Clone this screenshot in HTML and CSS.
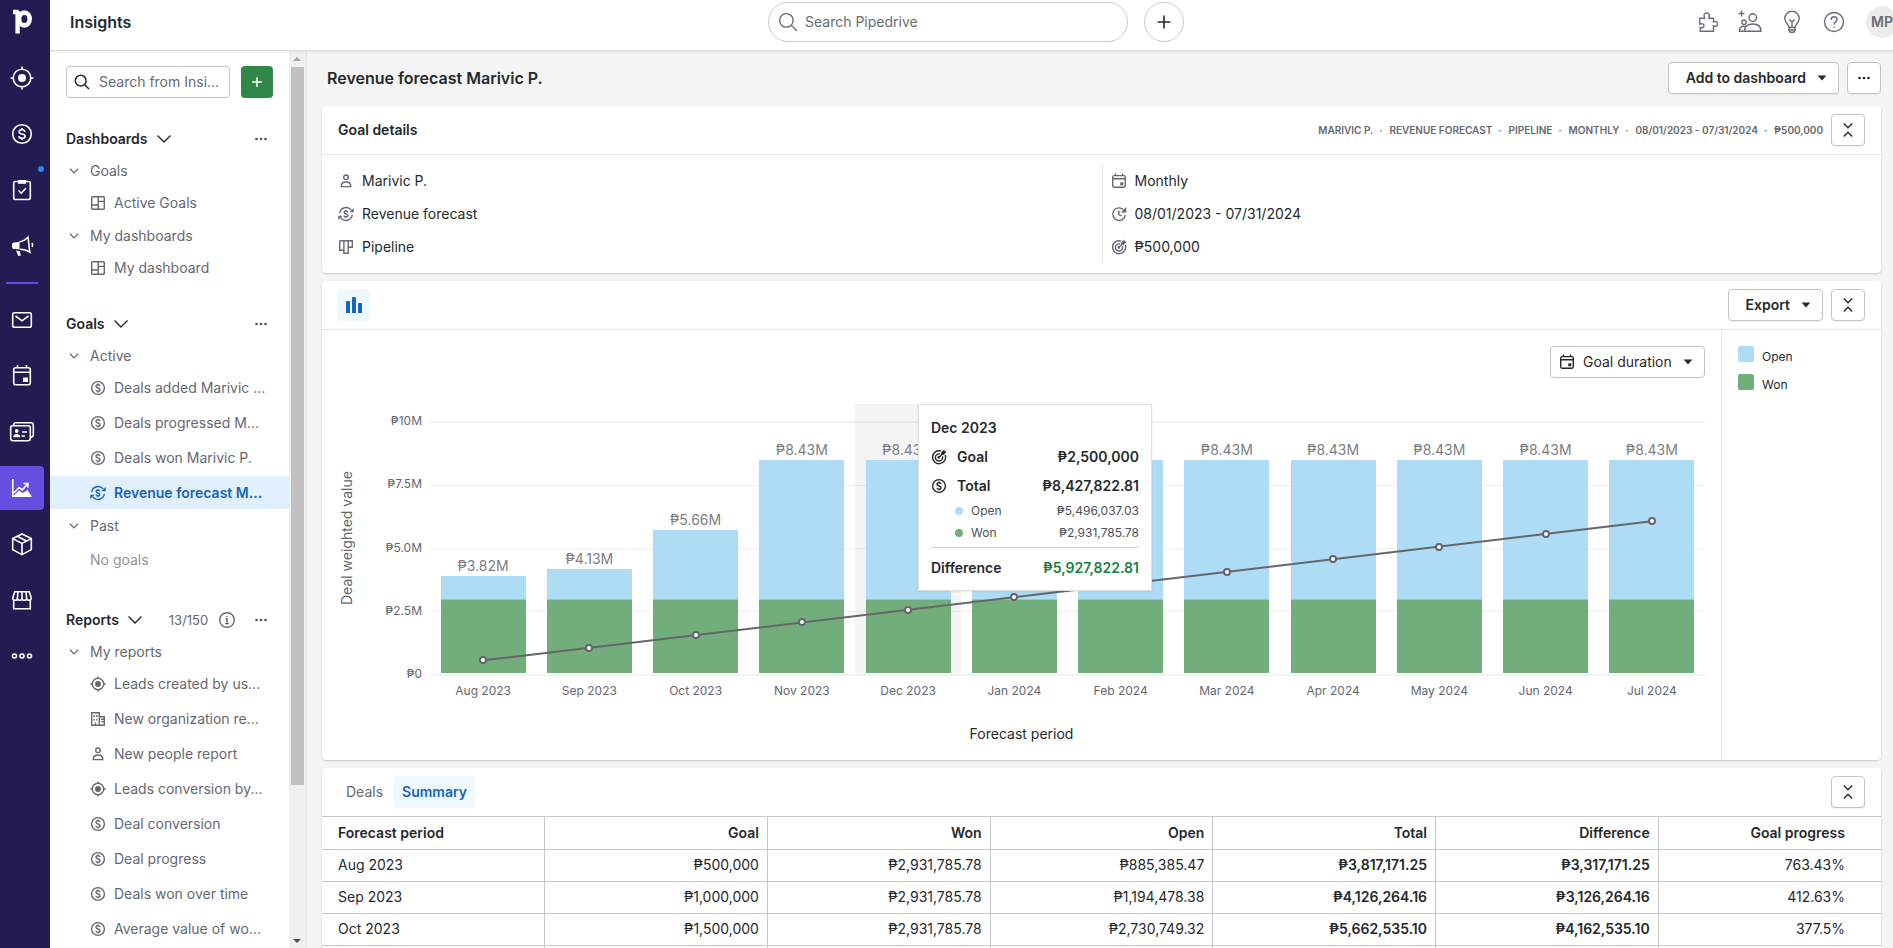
FILE: index.html
```html
<!DOCTYPE html>
<html lang="en">
<head>
<meta charset="utf-8">
<title>Insights</title>
<meta name="viewport" content="width=device-width, initial-scale=1">
<link rel="stylesheet" href="styles.css">
</head>
<body>
<svg class="sprite" aria-hidden="true">
  <symbol id="i-deal" viewBox="0 0 16 16"><circle cx="8" cy="8" r="6.400"/><path d="M8 3.400v1.300M8 11.300v1.300M10 6.200C9.800 5.200 9 4.800 8 4.800c-1.100 0-2 .5-2 1.500 0 2.200 4 1.200 4 3.400 0 1-.9 1.500-2 1.500-1.200 0-2-.5-2.100-1.500"/></symbol>
  <symbol id="i-forecast" viewBox="0 0 16 16"><path d="M1.700 7A6.400 6.400 0 0 1 13.200 4.200M14.300 9A6.400 6.400 0 0 1 2.800 11.800"/><path class="fill" d="M15.700 2v4.300h-4.300zM.3 14V9.700h4.300z"/><path d="M8 3.900v1M8 11.100v1M9.900 6.300C9.700 5.400 9 5 8 5c-1.100 0-1.900.5-1.900 1.400 0 2 3.800 1.200 3.800 3.200 0 1-.9 1.400-1.900 1.400-1.100 0-1.900-.4-2-1.400"/></symbol>
  <symbol id="i-lead" viewBox="0 0 16 16"><circle cx="8" cy="8" r="5.700"/><circle class="fill" cx="8" cy="8" r="3"/><path d="M8 .4v2.400M8 13.200v2.400M.4 8h2.400M13.200 8h2.400"/></symbol>
  <symbol id="i-building" viewBox="0 0 16 16"><path d="M1.700 1.700h7.600v12.600H1.700zM9.300 5.700h5v8.600h-5M4.200 4v2M6.800 4v2M4.200 8v1.500M6.800 8v1.500M5.500 11.500v2.800M11.200 8.200h3M11.200 10.600h3"/></symbol>
  <symbol id="i-person" viewBox="0 0 16 16"><circle cx="8" cy="4.300" r="2.300"/><path d="M3.200 13.600c0-3 2-4.600 4.800-4.600s4.800 1.600 4.800 4.600z"/></symbol>
  <symbol id="i-dash" viewBox="0 0 16 16"><rect x="1.700" y="1.700" width="12.600" height="12.600" rx="1"/><path d="M8.200 1.700v12.600M1.700 10h6.500M8.200 6.400h6.100"/></symbol>
  <symbol id="i-board" viewBox="0 0 16 16"><path d="M1.700 1.700h12.600V8.300h-4.100M1.700 1.700v9.600h4.200M5.900 1.700v12.600h4.300V1.700"/></symbol>
  <symbol id="i-cal" viewBox="0 0 16 16"><rect x="1.700" y="2.600" width="12.600" height="11.600" rx="1.400"/><path d="M1.700 5.800h12.600M4.500.600V3M11.500.600V3"/><rect class="fill" x="9.300" y="9.300" width="3" height="3"/></symbol>
  <symbol id="i-clock" viewBox="0 0 16 16"><path d="M12.400 3.600A6.300 6.300 0 1 0 14.300 9M7.800 4.500v4l2.700 1.400"/><path class="fill" d="M15.300 1v5.400H9.900z"/></symbol>
  <symbol id="i-goal" viewBox="0 0 16 16"><path d="M10 2A6.500 6.500 0 1 0 14.200 6M9 5a3.600 3.600 0 1 0 2.400 2.300M7.800 8.400l4-4"/><circle class="fill" cx="7.800" cy="8.400" r="1.300"/><path class="fill" d="M10 3.600 13.200.400l.5 1.900 2 .5-3.100 3.100-2.200-.4z"/></symbol>
  <symbol id="i-chev" viewBox="0 0 16 16"><path d="M1.500 4.500 8 11l6.500-6.500"/></symbol>
  <symbol id="i-dots" viewBox="0 0 16 16"><circle class="fill" cx="3.500" cy="8" r="1.300"/><circle class="fill" cx="8" cy="8" r="1.300"/><circle class="fill" cx="12.500" cy="8" r="1.300"/></symbol>
  <symbol id="i-info" viewBox="0 0 16 16"><circle cx="8" cy="8" r="7.300"/><path d="M6.600 6.800H8v4.600M6.200 11.600h3.600"/><circle class="fill" cx="8" cy="4.600" r=".8"/></symbol>
  <symbol id="i-caret" viewBox="0 0 10 6"><path class="fill" d="M.6.500h8.800L5 5.500z"/></symbol>
  <symbol id="i-collapse" viewBox="0 0 16 16"><path d="M3.800 1.500 8 5.700l4.200-4.200M3.800 14.500 8 10.300l4.200 4.200"/></symbol>
  <symbol id="i-search" viewBox="0 0 16 16"><circle cx="6.700" cy="6.700" r="5.400"/><path d="m10.700 10.700 4.300 4.300"/></symbol>
  <symbol id="i-plus" viewBox="0 0 16 16"><path d="M8 1.500v13M1.500 8h13"/></symbol>
</svg>

<div class="app">
  <nav class="rail" aria-label="Main">
    <a class="rail-link" href="#" aria-label="Home"><svg viewBox="0 0 44 44"><path d="M13 12h5.500M17.600 11v22.500" stroke-width="4.400"/><ellipse cx="24.400" cy="19" rx="5.300" ry="6.400" stroke-width="4.600"/></svg></a>
    <a class="rail-link" href="#" aria-label="Leads"><svg viewBox="0 0 44 44"><circle cx="22" cy="22" r="8.800"/><circle class="fill" cx="22" cy="22" r="4"/><path d="M22 10.500v3M22 30.500v3M10.500 22h3M30.500 22h3"/></svg></a>
    <a class="rail-link" href="#" aria-label="Deals"><svg viewBox="0 0 44 44"><circle cx="22" cy="22" r="9.300"/><path d="M22 16v1.600M22 26.400V28M24.900 19.800c-.2-1.400-1.400-2-2.900-2-1.700 0-2.900.8-2.900 2.100 0 3 6 1.300 6 4.300 0 1.300-1.300 2.100-3.100 2.100s-3-.8-3.100-2.200"/></svg></a>
    <a class="rail-link" href="#" aria-label="Projects"><svg viewBox="0 0 44 44"><rect x="13.700" y="13.500" width="16.600" height="18" rx="1.500"/><path class="fill" d="M18 12h8v3.800h-8z"/><path d="m18.500 22.500 2.700 2.700 4.600-5"/></svg><span class="rail-dot"></span></a>
    <a class="rail-link" href="#" aria-label="Campaigns"><svg viewBox="0 0 44 44"><path class="fill" d="M12 20.500c0-1.500 1-2 2.500-2l5-.8v7.600l-5-.3c-1.500 0-2.500-.6-2.500-2zM16 26.500l3.600.4 1.300 4.600-2.600.6z"/><path d="M19.500 18c3.500-.8 6.500-2.600 8.500-4.800l1.800 15c-2.800-2-6.300-3-10-3M31.500 19.200c1.300.5 1.500 2.800.3 3.600"/></svg></a>
    <span class="rail-sep"></span>
    <a class="rail-link" href="#" aria-label="Mail"><svg viewBox="0 0 44 44"><rect x="12.700" y="14.700" width="18.600" height="14.600" rx="1.800"/><path d="m15.500 18 6.500 4.800 6.500-4.800"/></svg></a>
    <a class="rail-link" href="#" aria-label="Activities"><svg viewBox="0 0 44 44"><rect x="13.700" y="13.700" width="16.600" height="17" rx="2"/><path d="M13.700 18.300h16.600M17.500 11v3M26.500 11v3"/><rect class="fill" x="23" y="23.500" width="5" height="4.500"/></svg></a>
    <a class="rail-link" href="#" aria-label="Contacts"><svg viewBox="0 0 44 44"><rect x="10.700" y="15.700" width="19.600" height="15" rx="2.200"/><path d="M13.500 15.200c.2-1.700.9-2.500 2.200-2.500H31c1.500 0 2.300.8 2.300 2.200v9.800c0 1.500-.8 2.300-2.500 2.500M22 22h5M21.500 26h3.500"/><circle class="fill" cx="16.700" cy="21" r="1.900"/><path class="fill" d="M13.200 27.300c0-2.300 1.500-3.300 3.500-3.300s3.500 1 3.500 3.300z"/></svg></a>
    <a class="rail-link is-active" href="#" aria-label="Insights" aria-current="page"><svg viewBox="0 0 44 44"><path d="M12.800 13v17.200h18.500M14 27l5-5.500 3.500 2.500 5.500-7"/><path d="M23.500 17.500h4.300v4"/><path class="fill" d="m13.500 30 5.500-5.500 4 2.500 4.500-3L32 30.800z"/></svg></a>
    <a class="rail-link" href="#" aria-label="Products"><svg viewBox="0 0 44 44"><path d="m22 12 9.300 4.600v11L22 32.600l-9.300-5v-11zM12.700 16.600 22 21.400l9.300-4.800M22 21.400v11.200M17.200 14.300l9.300 4.700"/></svg></a>
    <a class="rail-link" href="#" aria-label="Marketplace"><svg viewBox="0 0 44 44"><path d="M14.700 13.700h14.600l2 6.300c0 1.500-1 2.300-2.400 2.300s-2.300-.8-2.300-2.300c0 1.500-1 2.300-2.300 2.300S22 21.500 22 20c0 1.500-1 2.300-2.300 2.300s-2.300-.8-2.300-2.300c0 1.500-1 2.300-2.300 2.300s-2.400-.8-2.400-2.300zM18 13.700 17.400 20M22 13.700V20M26 13.700l.6 6.300M13.700 22.500v8.200h16.600v-8.200"/></svg></a>
    <a class="rail-link" href="#" aria-label="More"><svg viewBox="0 0 44 44"><circle cx="14.500" cy="22" r="2"/><circle cx="22" cy="22" r="2"/><circle cx="29.500" cy="22" r="2"/></svg></a>
  </nav>

  <header class="topbar">
    <div class="topbar-title">Insights</div>
    <div class="topbar-center">
      <label class="global-search"><svg class="icon"><use href="#i-search"/></svg><input type="text" placeholder="Search Pipedrive" aria-label="Search Pipedrive"></label>
      <button class="round-btn" type="button" aria-label="Quick add"><svg class="icon"><use href="#i-plus"/></svg></button>
    </div>
    <div class="topbar-actions">
      <button class="plain-btn" type="button" aria-label="Apps"><svg viewBox="0 0 24 24"><path d="M3.700 8.200h4.800V7.200C7.300 5 8.500 3 10.700 3s3.400 2 2.200 4.200v1h4.600V12c2-1.200 4-.3 4 1.900s-2 3.100-4 1.900v5.500H4.300v-4c2 .9 3.700.2 3.700-1.600s-1.700-2.500-4.300-1.500z"/></svg></button>
      <button class="plain-btn" type="button" aria-label="Invite users"><svg viewBox="0 0 24 24"><path d="M3.500.500v6M.5 3.500h6M6.500 21.300c0-5 3-7.300 8.300-7.300s8.200 2.300 8.200 7.300zM6 21.300H1.500c0-3.500 1.500-5 4.500-5 .8 0 1.300 0 1.900.3"/><circle cx="14.800" cy="7.600" r="3.800"/><circle cx="6" cy="12.200" r="2.200"/></svg></button>
      <button class="plain-btn" type="button" aria-label="Tips"><svg viewBox="0 0 24 24"><path d="M9 17.500c0-3-4.200-4.500-4.200-9a7.200 7.200 0 0 1 14.400 0c0 4.500-4.200 6-4.200 9zM9 17.500v2.800l1.200 1.900h3.600l1.200-1.900v-2.800M9 20h6M9.500 9.500 12 12l2.500-2.500M12 12v5.500"/></svg></button>
      <button class="plain-btn" type="button" aria-label="Help"><svg viewBox="0 0 24 24"><circle cx="12" cy="12" r="9.500"/><path d="M9 9.700c0-1.800 1.200-3 3-3s3.100 1.200 3.100 2.900c0 2.300-3.100 2.300-3.100 4.900"/><circle class="fill" cx="12" cy="17.300" r=".8"/></svg></button>
      <button class="avatar" type="button">MP</button>
    </div>
  </header>

  <aside class="sidebar">
    <div class="side-search">
      <label class="side-field"><svg class="icon"><use href="#i-search"/></svg><input type="text" placeholder="Search from Insi..." aria-label="Search from Insights"></label>
      <button class="add-btn" type="button" aria-label="Add"><svg class="icon"><use href="#i-plus"/></svg></button>
    </div>

    <section class="side-section">
      <div class="side-head"><h2>Dashboards</h2><svg class="icon"><use href="#i-chev"/></svg><button class="more" type="button" aria-label="More"><svg class="icon"><use href="#i-dots"/></svg></button></div>
      <div class="folder"><svg><use href="#i-chev"/></svg>Goals</div>
      <div class="side-list"><a class="side-item" href="#"><svg class="icon"><use href="#i-dash"/></svg>Active Goals</a></div>
      <div class="folder"><svg><use href="#i-chev"/></svg>My dashboards</div>
      <div class="side-list"><a class="side-item" href="#"><svg class="icon"><use href="#i-dash"/></svg>My dashboard</a></div>
    </section>

    <section class="side-section">
      <div class="side-head"><h2>Goals</h2><svg class="icon"><use href="#i-chev"/></svg><button class="more" type="button" aria-label="More"><svg class="icon"><use href="#i-dots"/></svg></button></div>
      <div class="folder"><svg><use href="#i-chev"/></svg>Active</div>
      <div class="side-list">
        <a class="side-item" href="#"><svg class="icon"><use href="#i-deal"/></svg>Deals added Marivic ...</a>
        <a class="side-item" href="#"><svg class="icon"><use href="#i-deal"/></svg>Deals progressed M...</a>
        <a class="side-item" href="#"><svg class="icon"><use href="#i-deal"/></svg>Deals won Marivic P.</a>
        <a class="side-item is-active" href="#"><svg class="icon"><use href="#i-forecast"/></svg>Revenue forecast M...</a>
      </div>
      <div class="folder"><svg><use href="#i-chev"/></svg>Past</div>
      <p class="side-empty">No goals</p>
    </section>

    <section class="side-section">
      <div class="side-head"><h2>Reports</h2><svg class="icon"><use href="#i-chev"/></svg><span class="count">13/150</span><svg class="icon info"><use href="#i-info"/></svg><button class="more" type="button" aria-label="More"><svg class="icon"><use href="#i-dots"/></svg></button></div>
      <div class="folder"><svg><use href="#i-chev"/></svg>My reports</div>
      <div class="side-list">
        <a class="side-item" href="#"><svg class="icon"><use href="#i-lead"/></svg>Leads created by us...</a>
        <a class="side-item" href="#"><svg class="icon"><use href="#i-building"/></svg>New organization re...</a>
        <a class="side-item" href="#"><svg class="icon"><use href="#i-person"/></svg>New people report</a>
        <a class="side-item" href="#"><svg class="icon"><use href="#i-lead"/></svg>Leads conversion by...</a>
        <a class="side-item" href="#"><svg class="icon"><use href="#i-deal"/></svg>Deal conversion</a>
        <a class="side-item" href="#"><svg class="icon"><use href="#i-deal"/></svg>Deal progress</a>
        <a class="side-item" href="#"><svg class="icon"><use href="#i-deal"/></svg>Deals won over time</a>
        <a class="side-item" href="#"><svg class="icon"><use href="#i-deal"/></svg>Average value of wo...</a>
      </div>
    </section>
  </aside>
  <div class="scrollbar" aria-hidden="true"><span class="arrow up"></span><span class="thumb"></span><span class="arrow down"></span></div>

  <main class="main">
    <div class="page-head">
      <h1>Revenue forecast Marivic P.</h1>
      <button class="btn" type="button">Add to dashboard<svg class="caret"><use href="#i-caret"/></svg></button>
      <button class="btn square" type="button" aria-label="More"><svg class="icon"><use href="#i-dots"/></svg></button>
    </div>

    <section class="card">
      <div class="card-head">
        <h3>Goal details</h3>
        <div class="crumbs"><span>MARIVIC P.</span><i>·</i><span>REVENUE FORECAST</span><i>·</i><span>PIPELINE</span><i>·</i><span>MONTHLY</span><i>·</i><span>08/01/2023 - 07/31/2024</span><i>·</i><span>₱500,000</span></div>
        <button class="btn square" type="button" aria-label="Collapse"><svg class="icon"><use href="#i-collapse"/></svg></button>
      </div>
      <div class="details">
        <ul>
          <li><svg class="icon"><use href="#i-person"/></svg>Marivic P.</li>
          <li><svg class="icon"><use href="#i-forecast"/></svg>Revenue forecast</li>
          <li><svg class="icon"><use href="#i-board"/></svg>Pipeline</li>
        </ul>
        <ul>
          <li><svg class="icon"><use href="#i-cal"/></svg>Monthly</li>
          <li><svg class="icon"><use href="#i-clock"/></svg>08/01/2023 - 07/31/2024</li>
          <li><svg class="icon"><use href="#i-goal"/></svg>₱500,000</li>
        </ul>
      </div>
    </section>

    <section class="card">
      <div class="card-head">
        <button class="chart-type" type="button" aria-label="Column chart"><svg class="icon" viewBox="0 0 16 16"><rect class="fill" x="0" y="4" width="4" height="12" rx=".6"/><rect class="fill" x="6" y="0" width="4" height="16" rx=".6"/><rect class="fill" x="12" y="6" width="4" height="10" rx=".6"/></svg></button>
        <button class="btn push" type="button">Export<svg class="caret"><use href="#i-caret"/></svg></button>
        <button class="btn square" type="button" aria-label="Collapse"><svg class="icon"><use href="#i-collapse"/></svg></button>
      </div>
      <div class="chart-body">
        <div class="chart-area">
          <label class="duration"><svg class="icon"><use href="#i-cal"/></svg><select aria-label="Period"><option>Goal duration</option></select><svg class="caret"><use href="#i-caret"/></svg></label>
          <div class="chart">
            <div class="y-title">Deal weighted value</div>
            <div class="y-labels"><span>₱10M</span><span>₱7.5M</span><span>₱5.0M</span><span>₱2.5M</span><span>₱0</span></div>
            <div class="plot">
              <div class="gridlines"><i></i><i></i><i></i><i></i><i></i></div>
              <div class="cols">
                <div class="col"><div class="stack"><span class="val">₱3.82M</span><div class="open" style="height:8.85%"></div><div class="won" style="height:29.32%"></div><i class="dot" style="bottom:5%"></i></div></div>
                <div class="col"><div class="stack"><span class="val">₱4.13M</span><div class="open" style="height:11.94%"></div><div class="won" style="height:29.32%"></div><i class="dot" style="bottom:10%"></i></div></div>
                <div class="col"><div class="stack"><span class="val">₱5.66M</span><div class="open" style="height:27.31%"></div><div class="won" style="height:29.32%"></div><i class="dot" style="bottom:15%"></i></div></div>
                <div class="col"><div class="stack"><span class="val">₱8.43M</span><div class="open" style="height:54.96%"></div><div class="won" style="height:29.32%"></div><i class="dot" style="bottom:20%"></i></div></div>
                <div class="col is-hover"><div class="stack"><span class="val">₱8.43M</span><div class="open" style="height:54.96%"></div><div class="won" style="height:29.32%"></div><i class="dot" style="bottom:25%"></i></div></div>
                <div class="col"><div class="stack"><div class="open" style="height:54.96%"></div><div class="won" style="height:29.32%"></div><i class="dot" style="bottom:30%"></i></div></div>
                <div class="col"><div class="stack"><div class="open" style="height:54.96%"></div><div class="won" style="height:29.32%"></div><i class="dot" style="bottom:35%"></i></div></div>
                <div class="col"><div class="stack"><span class="val">₱8.43M</span><div class="open" style="height:54.96%"></div><div class="won" style="height:29.32%"></div><i class="dot" style="bottom:40%"></i></div></div>
                <div class="col"><div class="stack"><span class="val">₱8.43M</span><div class="open" style="height:54.96%"></div><div class="won" style="height:29.32%"></div><i class="dot" style="bottom:45%"></i></div></div>
                <div class="col"><div class="stack"><span class="val">₱8.43M</span><div class="open" style="height:54.96%"></div><div class="won" style="height:29.32%"></div><i class="dot" style="bottom:50%"></i></div></div>
                <div class="col"><div class="stack"><span class="val">₱8.43M</span><div class="open" style="height:54.96%"></div><div class="won" style="height:29.32%"></div><i class="dot" style="bottom:55%"></i></div></div>
                <div class="col"><div class="stack"><span class="val">₱8.43M</span><div class="open" style="height:54.96%"></div><div class="won" style="height:29.32%"></div><i class="dot" style="bottom:60%"></i></div></div>
              </div>
              <svg class="goal-line" viewBox="0 0 1200 100" preserveAspectRatio="none" aria-hidden="true"><path d="M50 95 1150 40" vector-effect="non-scaling-stroke"/></svg>
              <div class="tooltip">
                <strong class="tip-title">Dec 2023</strong>
                <div class="tip-row"><svg class="icon"><use href="#i-goal"/></svg><span>Goal</span><b>₱2,500,000</b></div>
                <div class="tip-row"><svg class="icon"><use href="#i-deal"/></svg><span>Total</span><b>₱8,427,822.81</b></div>
                <div class="tip-sub"><i class="sw-open"></i><span>Open</span><b>₱5,496,037.03</b></div>
                <div class="tip-sub"><i class="sw-won"></i><span>Won</span><b>₱2,931,785.78</b></div>
                <div class="tip-diff"><span>Difference</span><b>₱5,927,822.81</b></div>
              </div>
            </div>
            <div class="x-labels"><span>Aug 2023</span><span>Sep 2023</span><span>Oct 2023</span><span>Nov 2023</span><span>Dec 2023</span><span>Jan 2024</span><span>Feb 2024</span><span>Mar 2024</span><span>Apr 2024</span><span>May 2024</span><span>Jun 2024</span><span>Jul 2024</span></div>
          </div>
          <div class="x-title">Forecast period</div>
        </div>
        <div class="legend">
          <div><i class="sw-open"></i><span>Open</span></div>
          <div><i class="sw-won"></i><span>Won</span></div>
        </div>
      </div>
    </section>

    <section class="card">
      <div class="card-head table-head">
        <div class="tabs"><button type="button">Deals</button><button class="is-active" type="button">Summary</button></div>
        <button class="btn square push" type="button" aria-label="Collapse"><svg class="icon"><use href="#i-collapse"/></svg></button>
      </div>
      <table class="summary">
        <thead><tr><th>Forecast period</th><th>Goal</th><th>Won</th><th>Open</th><th>Total</th><th>Difference</th><th>Goal progress</th></tr></thead>
        <tbody>
          <tr><td>Aug 2023</td><td>₱500,000</td><td>₱2,931,785.78</td><td>₱885,385.47</td><td><b>₱3,817,171.25</b></td><td><b>₱3,317,171.25</b></td><td>763.43%</td></tr>
          <tr><td>Sep 2023</td><td>₱1,000,000</td><td>₱2,931,785.78</td><td>₱1,194,478.38</td><td><b>₱4,126,264.16</b></td><td><b>₱3,126,264.16</b></td><td>412.63%</td></tr>
          <tr><td>Oct 2023</td><td>₱1,500,000</td><td>₱2,931,785.78</td><td>₱2,730,749.32</td><td><b>₱5,662,535.10</b></td><td><b>₱4,162,535.10</b></td><td>377.5%</td></tr>
          <tr><td></td><td></td><td></td><td></td><td></td><td></td><td></td></tr>
        </tbody>
      </table>
    </section>
  </main>
</div>
</body>
</html>
```
FILE: styles.css
```css
* { box-sizing: border-box; }
body {
  margin: 0;
  font: 14px/20px Inter, "Liberation Sans", sans-serif;
  color: #26292c;
  background: #f4f4f4;
}
h1, h2, h3, p, ul { margin: 0; padding: 0; font-size: inherit; font-weight: 600; }
p { font-weight: 400; }
ul { list-style: none; font-weight: 400; }
i { font-style: normal; }
button, input, select { font: inherit; color: inherit; margin: 0; }
button { cursor: pointer; }
a { color: inherit; text-decoration: none; }
svg { display: block; fill: none; stroke: currentColor; stroke-width: 1.4; flex: none; }
.fill { fill: currentColor; stroke: none; }
.sprite { position: absolute; width: 0; height: 0; }
.icon { width: 16px; height: 16px; }
.caret { width: 10px; height: 6px; }
.push { margin-left: auto; }

.app {
  display: grid;
  grid-template-columns: 50px 239px 18px minmax(0, 1fr);
  grid-template-rows: 51px minmax(0, 1fr);
  height: 100vh;
  overflow: hidden;
}

/* Left rail */
.rail {
  grid-row: 1 / 3;
  display: flex;
  flex-direction: column;
  gap: 12px;
  background: #221c53;
  color: #fff;
}
.rail-link { position: relative; flex: none; width: 44px; height: 44px; border-radius: 0 4px 4px 0; }
.rail-link svg { width: 44px; height: 44px; stroke-width: 1.6; }
.rail-link.is-active { background: #6450e0; }
.rail-dot { position: absolute; top: -2px; right: 0; width: 6px; height: 6px; border-radius: 50%; background: #2b88d9; }
.rail-sep { flex: none; width: 32px; height: 2px; margin: 2px 6px; background: #6450e0; }

/* Top bar */
.topbar {
  grid-column: 2 / 5;
  display: grid;
  grid-template-columns: 1fr auto 1fr;
  align-items: center;
  margin-right: -9px;
  padding-bottom: 6px;
  background: #fff;
  border-bottom: 1px solid #dedfe0;
  box-shadow: 0 1px 2px rgba(38, 41, 44, .1);
  position: relative;
  z-index: 1;
}
.topbar-title { padding-left: 20px; font-size: 16px; font-weight: 600; }
.topbar-center { display: flex; gap: 16px; }
.global-search {
  display: flex;
  align-items: center;
  gap: 7px;
  width: 360px;
  height: 40px;
  padding: 0 9px;
  border: 1px solid #cbccce;
  border-radius: 20px;
  color: #6a6c72;
}
.global-search .icon { width: 20px; height: 20px; stroke-width: 1.1; }
.global-search input, .side-field input { width: 100%; min-width: 0; padding: 0; border: 0; outline: 0; background: none; }
input::placeholder { color: #6a6c72; opacity: 1; }
.round-btn { display: grid; place-items: center; width: 40px; height: 40px; padding: 0; border: 1px solid #cbccce; border-radius: 50%; background: #fff; }
.round-btn .icon { stroke-width: 1.6; }
.topbar-actions { display: flex; justify-content: flex-end; align-items: center; gap: 18px; padding-right: 4px; color: #6a6c72; }
.plain-btn { width: 24px; height: 24px; padding: 0; border: 0; background: none; }
.plain-btn svg { width: 24px; height: 24px; stroke-width: 1.4; }
.avatar { width: 32px; height: 32px; margin-left: 2px; padding: 0; border: 0; border-radius: 50%; background: #ebecec; font-weight: 600; }

/* Sidebar */
.sidebar { background: #fff; padding-top: 15px; overflow: hidden; color: #65686f; }
.side-search { display: flex; gap: 11px; padding: 0 16px; margin-bottom: 25px; }
.side-field { display: flex; align-items: center; gap: 9px; flex: 1; min-width: 0; height: 32px; padding: 0 7px; border: 1px solid #c3c4c7; border-radius: 4px; background: #fff; color: #26292c; }
.side-field .icon { stroke-width: 1.5; }
.add-btn { display: grid; place-items: center; width: 32px; height: 32px; padding: 0; border: 0; border-radius: 4px; background: #2f8748; color: #fff; }
.add-btn .icon { width: 12px; height: 12px; stroke-width: 2; }
.side-section { margin-bottom: 24px; }
.side-head { display: flex; align-items: center; height: 32px; padding: 0 20px 0 16px; color: #26292c; }
.side-head h2 { margin-right: 8px; }
.side-head .count { margin-left: 26px; font-size: 13px; color: #65686f; }
.side-head .info { margin-left: 11px; color: #65686f; }
.more { margin-left: auto; padding: 0; border: 0; background: none; color: #4d5056; }
.folder { display: flex; align-items: center; gap: 11px; height: 32px; padding-left: 19px; }
.folder svg { width: 10px; height: 10px; stroke-width: 2; }
.side-list { display: flex; flex-direction: column; gap: 2px; margin: -1px 0 1px; }
.side-item { display: flex; align-items: center; gap: 8px; height: 33px; padding-left: 40px; white-space: nowrap; }
.side-item.is-active { background: #e1efff; color: #1765b5; font-weight: 600; }
.side-empty { padding: 8px 0 10px 40px; color: #919398; }

.scrollbar { display: flex; flex-direction: column; align-items: center; justify-content: space-between; background: #f0f0f0; padding: 6px 1px 5px 0; border-right: 1px solid #e6e6e6; }
.scrollbar .thumb { width: 13px; height: 81%; margin-bottom: auto; margin-top: 6px; background: #c1c1c1; }
.arrow { border: 4px solid transparent; }
.arrow.up { border-top: 0; border-bottom-color: #a3a3a3; }
.arrow.down { border-bottom: 0; border-top-color: #505050; }

/* Main */
.main { display: flex; flex-direction: column; gap: 8px; padding: 11px 12px 0 15px; overflow: hidden; }
.page-head { display: flex; align-items: center; gap: 8px; padding: 0 0 4px 5px; }
.page-head h1 { margin-right: auto; font-size: 16px; }
.btn { display: flex; align-items: center; gap: 11px; height: 32px; padding: 0 11px 0 17px; border: 1px solid #c3c4c7; border-radius: 4px; background: #fff; box-shadow: 0 1px 1px rgba(38, 41, 44, .06); font-weight: 600; white-space: nowrap; }
.btn.square { justify-content: center; width: 34px; padding: 0; }
.card { flex: none; background: #fff; border-radius: 4px; box-shadow: 0 1px 2px rgba(38, 41, 44, .2); }
.card-head { display: flex; align-items: center; gap: 8px; height: 49px; padding: 0 16px; border-bottom: 1px solid #e5e5e6; }
.crumbs { display: flex; gap: 6px; margin-left: auto; font-size: 10px; font-weight: 600; color: #65686f; }
.crumbs i { padding-right: 1px; }
.details { display: grid; grid-template-columns: 1fr 1fr; padding: 9px 16px 10px; }
.details ul + ul { border-left: 1px solid #e5e5e6; padding-left: 8px; }
.details li { display: flex; align-items: center; gap: 8px; height: 33px; }
.details li .icon { color: #65686f; }

/* Chart */
.chart-type { display: grid; place-items: center; width: 32px; height: 32px; padding: 0; border: 0; border-radius: 4px; background: #edf8ff; color: #1765c5; }
.chart-body { display: flex; }
.chart-area { flex: 1; min-width: 0; padding: 16px; display: flex; flex-direction: column; }
.duration { align-self: flex-end; display: flex; align-items: center; height: 32px; padding: 0 11px 0 8px; border: 1px solid #c3c4c7; border-radius: 4px; }
.duration select { appearance: none; border: 0; outline: 0; background: none; padding: 0; margin: 0 11px 0 8px; }
.chart { display: grid; grid-template-columns: 18px 66px minmax(0, 1fr); margin-top: 26px; }
.y-title { writing-mode: vertical-rl; transform: rotate(180deg); padding-top: 4px; text-align: center; line-height: 18px; color: #65686f; }
.y-labels { display: flex; flex-direction: column; justify-content: space-between; align-items: flex-end; margin: 9px 0 -6px; font-size: 12px; line-height: 16px; color: #65686f; }
.plot { position: relative; height: 272px; margin-left: 8px; padding-bottom: 3px; }
.gridlines { position: absolute; inset: 17px 0 0; display: flex; flex-direction: column; justify-content: space-between; }
.gridlines i { height: 1px; background: #efefef; }
.gridlines i:first-child, .gridlines i:last-child { height: 2px; background: #f2f2f2; }
.cols { position: relative; display: grid; grid-template-columns: repeat(12, 1fr); height: 100%; }
.col { padding: 16px 10% 0; }
.col.is-hover { background: rgba(0, 0, 0, .045); }
.stack { position: relative; display: flex; flex-direction: column; justify-content: flex-end; height: 100%; }
.val { text-align: center; color: #7d7f84; }
.open { background: #aedcf7; }
.won { background: #72ae7b; border-top: 1px solid #9bcb9f; }
.dot { position: absolute; left: 50%; z-index: 1; width: 8px; height: 8px; border: 2px solid #65656a; border-radius: 50%; background: #fff; transform: translate(-50%, 50%); }
.goal-line { position: absolute; top: 16px; left: 0; width: 100%; height: 253px; color: #65656a; stroke-width: 2; }
.tooltip { position: absolute; top: 0; left: calc(100% / 3 + 63px); z-index: 2; width: 234px; padding: 13px 12px 12px; border: 1px solid #e0e0e1; background: #fff; box-shadow: 0 1px 2px rgba(38, 41, 44, .1); }
.tooltip b { margin-left: auto; font-weight: 600; }
.tip-title { display: block; line-height: 20px; margin-bottom: 4px; font-weight: 600; }
.tip-row, .tip-sub, .tip-diff { display: flex; align-items: center; font-weight: 600; }
.tip-row { height: 29px; gap: 10px; }
.tip-sub { height: 22px; gap: 8px; padding-left: 24px; font-size: 12px; font-weight: 400; color: #4d5056; }
.tip-sub b { font-weight: 400; }
.tip-sub i { width: 8px; height: 8px; border-radius: 50%; }
.tip-diff { margin-top: 3px; padding-top: 10px; border-top: 1px solid #d0d1d3; }
.tip-diff b { color: #17803d; }
.sw-open { background: #aedcf7; }
.sw-won { background: #72ae7b; }
.x-labels { grid-column: 3; display: grid; grid-template-columns: repeat(12, 1fr); margin-left: 8px; padding-top: 7px; font-size: 12px; line-height: 16px; text-align: center; color: #65686f; }
.x-title { margin-top: 25px; text-align: center; }
.legend { width: 160px; border-left: 1px solid #e5e5e6; padding: 16px; font-size: 12px; }
.legend div { display: flex; gap: 8px; height: 28px; }
.legend i { width: 16px; height: 16px; border-radius: 2px; }
.legend span { padding-top: 1px; }

/* Summary table */
.table-head { border-bottom-color: #c7c8ca; }
.tabs { display: flex; gap: 3px; }
.tabs button { height: 32px; padding: 0 8px; border: 0; border-radius: 4px; background: none; color: #65686f; }
.tabs .is-active { background: #edf8ff; color: #1765b5; font-weight: 600; }
.summary { width: 100%; table-layout: fixed; border-collapse: collapse; }
.summary th, .summary td { height: 32px; padding: 0 8px; border-bottom: 1px solid #c7c8ca; border-right: 1px solid #c7c8ca; text-align: right; font-weight: 400; }
.summary th, .summary b { font-weight: 600; }
.summary th:first-child, .summary td:first-child { text-align: left; padding-left: 16px; }
.summary th:last-child, .summary td:last-child { border-right: 0; padding-right: 36px; }
```
